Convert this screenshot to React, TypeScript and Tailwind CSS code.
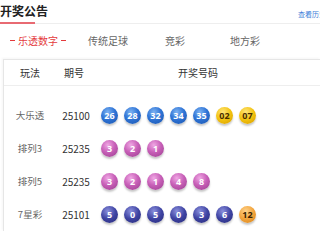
const BLUE =
  "bg-[radial-gradient(circle_at_40%_30%,#7db3f2_0%,#2f74d6_45%,#1b55ad_100%)] text-white";
const YELLOW =
  "bg-[radial-gradient(circle_at_40%_30%,#ffe57a_0%,#f2c20f_50%,#d49a00_100%)] text-[#4a2e00]";
const PURPLE =
  "bg-[radial-gradient(circle_at_40%_30%,#f0a8e4_0%,#c860b8_45%,#9a3d8e_100%)] text-white";
const NAVY =
  "bg-[radial-gradient(circle_at_40%_30%,#8a8fdc_0%,#3e43a2_50%,#282b78_100%)] text-white";
const ORANGE =
  "bg-[radial-gradient(circle_at_40%_30%,#ffd28a_0%,#f2a43c_50%,#d58218_100%)] text-[#3a2200]";

type Ball = { n: string; c: string };

const rows: { name: string; issue: string; balls: Ball[] }[] = [
  {
    name: "大乐透",
    issue: "25100",
    balls: [
      { n: "26", c: BLUE },
      { n: "28", c: BLUE },
      { n: "32", c: BLUE },
      { n: "34", c: BLUE },
      { n: "35", c: BLUE },
      { n: "02", c: YELLOW },
      { n: "07", c: YELLOW },
    ],
  },
  {
    name: "排列3",
    issue: "25235",
    balls: ["3", "2", "1"].map((n) => ({ n, c: PURPLE })),
  },
  {
    name: "排列5",
    issue: "25235",
    balls: ["3", "2", "1", "4", "8"].map((n) => ({ n, c: PURPLE })),
  },
  {
    name: "7星彩",
    issue: "25101",
    balls: [
      ...["5", "0", "5", "0", "3", "6"].map((n) => ({ n, c: NAVY })),
      { n: "12", c: ORANGE },
    ],
  },
];

const tabs = ["传统足球", "竞彩", "地方彩"];

export default function App() {
  return (
    <div className="w-[320px] h-[240px] bg-white overflow-hidden font-['Noto_Sans_CJK_SC','Noto_Sans',sans-serif]">
      {/* header */}
      <div className="h-[24px] border-b border-[#eeeeee] flex justify-between">
        <div className="h-[24px] w-[35px] border-b-2 border-[#e86a72] text-[12px] leading-[22px] font-bold text-[#222] whitespace-nowrap">
          开奖公告
        </div>
        <div className="text-[7px] leading-none text-[#3b7dd8] pt-[11px] w-[22px] overflow-hidden whitespace-nowrap">
          查看历史开奖
        </div>
      </div>

      {/* tabs */}
      <div className="h-[35px] flex items-center text-[10px] text-[#666] pb-[2px]">
        <div className="ml-[10px] w-[78px] flex items-center text-[#e4393c]">
          <span className="w-[5px] h-px bg-[#e4393c]" />
          <span className="mx-[3px] leading-none">乐透数字</span>
          <span className="w-[5px] h-px bg-[#e4393c]" />
        </div>
        <div className="w-[77px] leading-none">{tabs[0]}</div>
        <div className="w-[65px] leading-none">{tabs[1]}</div>
        <div className="leading-none">{tabs[2]}</div>
      </div>

      {/* table */}
      <div className="ml-[3px] border-t border-l border-[#e6e6e6] shadow-[-1px_-1px_2px_rgba(0,0,0,0.04)]">
        <div className="h-[26px] flex items-center border-b border-[#eeeeee] text-[10px] text-[#333]">
          <div className="w-[52px] text-center">玩法</div>
          <div className="w-[36px] text-center">期号</div>
          <div className="flex-1 text-center pr-[16px]">开奖号码</div>
        </div>
        <div className="pt-[13px]">
          {rows.map((r) => (
            <div key={r.name} className="h-[33px] flex items-center">
              <div className="w-[52px] text-center text-[9.5px] text-[#666]">{r.name}</div>
              <div className="w-[40px] text-center text-[10px] text-[#333]">{r.issue}</div>
              <div className="ml-[5px] flex gap-[6px]">
                {r.balls.map((b, i) => (
                  <div
                    key={i}
                    className={`w-[17px] h-[17px] rounded-full flex items-center justify-center text-[9px] font-bold leading-none shadow-[0_2px_2px_rgba(0,0,0,0.22)] font-['Open_Sans',sans-serif] ${b.c}`}
                  >
                    {b.n}
                  </div>
                ))}
              </div>
            </div>
          ))}
        </div>
      </div>
    </div>
  );
}
